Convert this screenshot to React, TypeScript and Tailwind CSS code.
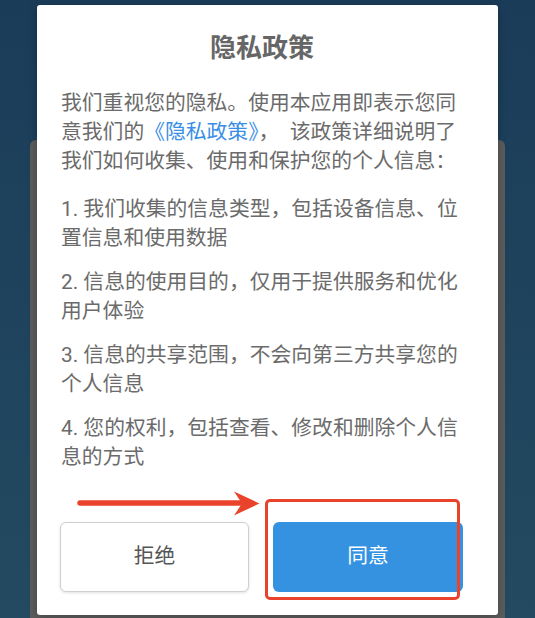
export default function App() {
  const items = [
    '1. 我们收集的信息类型，包括设备信息、位置信息和使用数据',
    '2. 信息的使用目的，仅用于提供服务和优化用户体验',
    '3. 信息的共享范围，不会向第三方共享您的个人信息',
    '4. 您的权利，包括查看、修改和删除个人信息的方式',
  ]

  return (
    <div
      className="relative w-[535px] h-[618px] overflow-hidden bg-gradient-to-b from-[#1b3c59] to-[#234a61] pt-[140px] px-[30px] flex"
      style={{ fontFamily: 'Roboto, "Noto Sans CJK SC", sans-serif' }}
    >
      {/* Page card behind the dialog */}
      <div className="flex-1 bg-[#5c5c5c] rounded-t-[6px]" />

      {/* Dialog overlay */}
      <div className="absolute left-[37px] top-[5px] w-[461px] h-[610px] bg-white rounded-[3px] shadow-[0_2px_10px_rgba(0,0,0,0.25)] pl-[24px] pr-[35px] pt-[25px] flex flex-col">
        <h1 className="text-center text-[26px] leading-[36px] font-bold text-[#666]">隐私政策</h1>

        <div className="mt-[23px] text-[20.8px] leading-[29px] text-[#6b6b6b]">
          <p className="mb-[19px]">
            我们重视您的隐私。使用本应用即表示您同意我们的
            <span className="text-[#3a8ee6]">《隐私政策》</span>，&nbsp; 该政策详细说明了我们如何收集、使用和保护您的个人信息：
          </p>
          <div className="flex flex-col gap-[15px]">
            {items.map((t) => (
              <p key={t}>{t}</p>
            ))}
          </div>
        </div>

        <div className="relative mt-[50px] flex gap-[24px] -ml-[1px]">
          {/* Annotation arrow */}
          <svg className="absolute left-[15px] -top-[34px]" width="190" height="32" viewBox="75 486 190 32">
            <line x1="80" y1="501" x2="244" y2="501" stroke="#e9442b" strokeWidth="5.5" strokeLinecap="round" />
            <path d="M234 489.5 L259.5 501.5 L234 513.5 L242 501.5 Z" fill="#e9442b" />
          </svg>

          <button className="w-[189px] h-[70px] rounded-[6px] border border-[#cfcfcf] bg-white text-[20.8px] text-[#555] shadow-[0_1px_3px_rgba(0,0,0,0.12)]">
            拒绝
          </button>
          <div className="relative">
            <button className="w-[190px] h-[70px] rounded-[6px] bg-[#3592e1] text-[20.8px] text-white">
              同意
            </button>
            {/* Annotation highlight box */}
            <div className="absolute -left-[8px] -top-[23px] w-[195px] h-[101px] border-[3px] border-[#e9442b] rounded-[5px]" />
          </div>
        </div>
      </div>
    </div>
  )
}
